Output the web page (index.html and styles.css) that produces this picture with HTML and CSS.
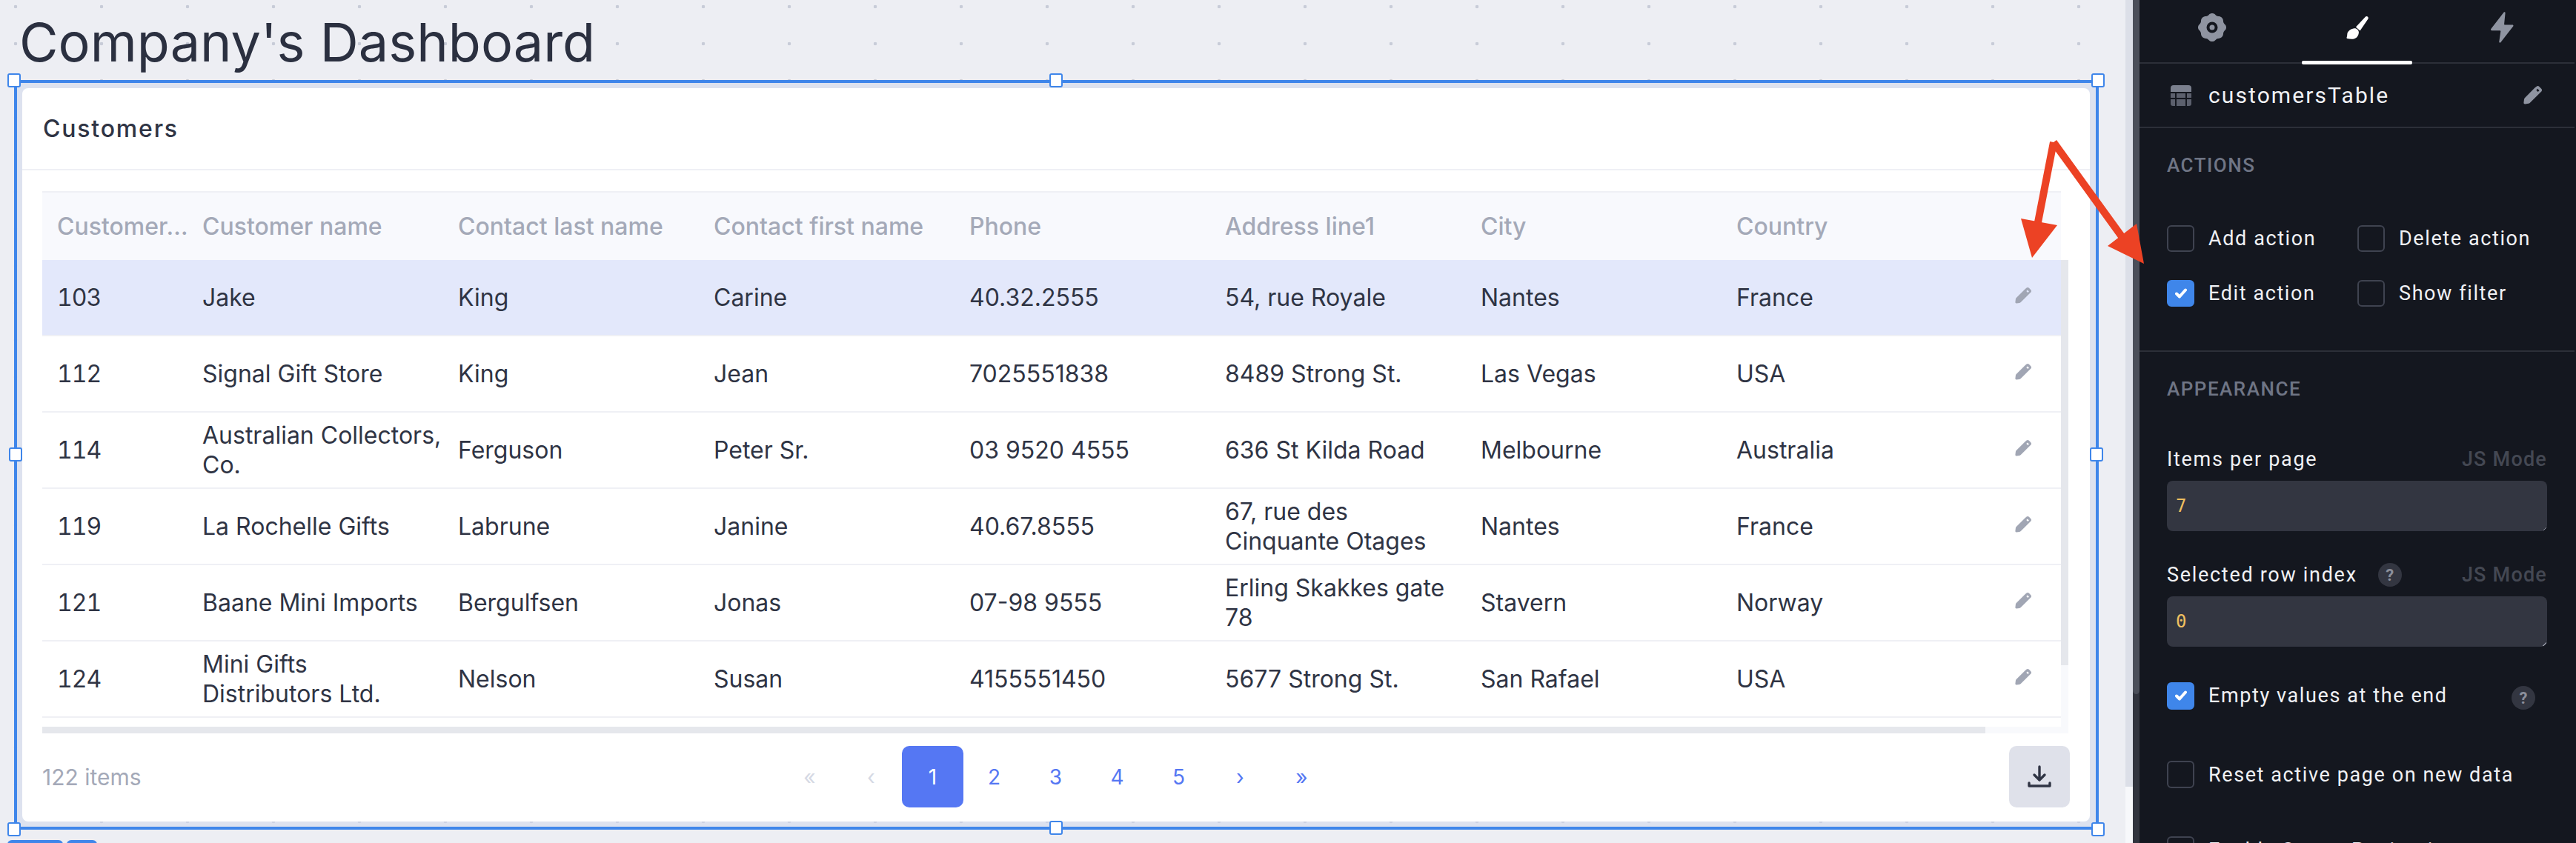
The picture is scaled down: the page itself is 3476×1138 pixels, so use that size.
FILE: index.html
```html
<!DOCTYPE html>
<html lang="en">
<head>
    <meta charset="UTF-8">
    <meta name="viewport" content="width=device-width, initial-scale=1.0">
    <title>Company's Dashboard</title>
    <link rel="stylesheet" href="styles.css">
</head>
<body>
    <svg class="sprites" width="0" height="0">
        <symbol id="pen" viewBox="0 0 22 22">
            <path fill-rule="evenodd" d="M13.6 2.200l2-1.600a2.600 2.600 0 0 1 3.300.2l2.400 2.400a2.600 2.600 0 0 1 .1 3.300L7.800 20c-.5.5-1 .8-1.700.9L2 21.500c-1 .1-1.700-.6-1.600-1.600l.5-4.200c.1-.7.4-1.200.9-1.700zM15.300 5l1.600-1.600 2 2-1.600 1.600z"/>
        </symbol>
        <symbol id="tick" viewBox="0 0 16 14">
            <path d="M2 7.500l4 4 8-9" fill="none" stroke="#fff" stroke-width="4" stroke-linecap="round" stroke-linejoin="round"/>
        </symbol>
    </svg>

    <div class="canvas">
        <h1 class="page-title">Company's Dashboard</h1>
        <div class="widget-frame">
            <span class="handle h-tl"></span><span class="handle h-tc"></span><span class="handle h-tr"></span>
            <span class="handle h-ml"></span><span class="handle h-mr"></span>
            <span class="handle h-bl"></span><span class="handle h-bc"></span><span class="handle h-br"></span>
            <div class="card">
                <div class="card-header">Customers</div>
                <div class="card-body">
                    <div class="table-wrap">
                        <table class="customers">
                            <colgroup>
                                <col class="col-id"><col class="col-std"><col class="col-std"><col class="col-std"><col class="col-std"><col class="col-std"><col class="col-std"><col class="col-std"><col>
                            </colgroup>
                            <thead>
                                <tr>
                                    <th>Customer…</th><th>Customer name</th><th>Contact last name</th><th>Contact first name</th><th>Phone</th><th>Address line1</th><th>City</th><th>Country</th><th></th>
                                </tr>
                            </thead>
                            <tbody>
                                <tr class="selected">
                                    <td>103</td><td>Jake</td><td>King</td><td>Carine</td><td>40.32.2555</td><td>54, rue Royale</td><td>Nantes</td><td>France</td>
                                    <td class="edit"><svg class="pen"><use href="#pen"/></svg></td>
                                </tr>
                                <tr>
                                    <td>112</td><td>Signal Gift Store</td><td>King</td><td>Jean</td><td>7025551838</td><td>8489 Strong St.</td><td>Las Vegas</td><td>USA</td>
                                    <td class="edit"><svg class="pen"><use href="#pen"/></svg></td>
                                </tr>
                                <tr>
                                    <td>114</td><td>Australian Collectors, Co.</td><td>Ferguson</td><td>Peter Sr.</td><td>03 9520 4555</td><td>636 St Kilda Road</td><td>Melbourne</td><td>Australia</td>
                                    <td class="edit"><svg class="pen"><use href="#pen"/></svg></td>
                                </tr>
                                <tr>
                                    <td>119</td><td>La Rochelle Gifts</td><td>Labrune</td><td>Janine</td><td>40.67.8555</td><td>67, rue des Cinquante Otages</td><td>Nantes</td><td>France</td>
                                    <td class="edit"><svg class="pen"><use href="#pen"/></svg></td>
                                </tr>
                                <tr>
                                    <td>121</td><td>Baane Mini Imports</td><td>Bergulfsen</td><td>Jonas</td><td>07-98 9555</td><td>Erling Skakkes gate 78</td><td>Stavern</td><td>Norway</td>
                                    <td class="edit"><svg class="pen"><use href="#pen"/></svg></td>
                                </tr>
                                <tr>
                                    <td>124</td><td>Mini Gifts Distributors Ltd.</td><td>Nelson</td><td>Susan</td><td>4155551450</td><td>5677 Strong St.</td><td>San Rafael</td><td>USA</td>
                                    <td class="edit"><svg class="pen"><use href="#pen"/></svg></td>
                                </tr>
                            </tbody>
                        </table>
                        <div class="scroll-y"><div class="scroll-y-thumb"></div></div>
                        <div class="scroll-x"><div class="scroll-x-thumb"></div></div>
                    </div>
                    <div class="table-footer">
                        <div class="item-count">122 items</div>
                        <div class="pagination">
                            <span class="page muted">«</span>
                            <span class="page muted">‹</span>
                            <span class="page active">1</span>
                            <span class="page">2</span>
                            <span class="page">3</span>
                            <span class="page">4</span>
                            <span class="page">5</span>
                            <span class="page">›</span>
                            <span class="page">»</span>
                        </div>
                        <div class="download">
                            <svg viewBox="0 0 32 32" width="32" height="32"><path d="M16 2v17M9 13l7 7 7-7M2 24v4h28v-4" fill="none" stroke="#2f3444" stroke-width="3.400" stroke-linecap="round" stroke-linejoin="round"/></svg>
                        </div>
                    </div>
                </div>
            </div>
        </div>
        <div class="tag-row">
            <span class="tag tag-wide"></span><span class="tag tag-small"></span>
        </div>
    </div>

    <div class="gutter"><div class="gutter-thumb"></div></div>
    <div class="panel-scroll"><div class="panel-scroll-thumb"></div></div>

    <aside class="panel">
        <div class="tabs">
            <div class="tab">
                <svg viewBox="0 0 38 38" width="38" height="38"><path fill="#8f94a1" fill-rule="evenodd" d="M15 1.500c2-2 6-2 8 0 1.200 1.300 2.500 2.600 4.300 2.600 3.700 0 6.700 2.600 6.700 6.300 0 2 1 3.300 2.500 4.800 2 2 2 5.600 0 7.600-1.500 1.500-2.500 2.800-2.500 4.800 0 3.700-3 6.400-6.700 6.300-1.800 0-3.100 1.300-4.300 2.600-2 2-6 2-8 0-1.200-1.300-2.500-2.600-4.300-2.600C7 34 4 31.300 4 27.600c0-2-1-3.300-2.500-4.800-2-2-2-5.600 0-7.600C3 13.700 4 12.400 4 10.400c0-3.700 3-6.300 6.700-6.300 1.800 0 3.100-1.300 4.300-2.600zM19 11.500a7.500 7.500 0 1 0 0 15 7.500 7.500 0 0 0 0-15zM19 15.500a3.500 3.500 0 1 1 0 7 3.500 3.500 0 0 1 0-7z"/></svg>
            </div>
            <div class="tab tab-active">
                <svg viewBox="0 0 30 31" width="30" height="31"><path fill="#fff" d="M26 .6c1-.8 2.300-.7 3.100.1.800.8.900 2 .2 3L18.600 19.400l-5.700-4.900zM10.500 16.300c3-.7 6.700 2.300 6.400 5.700-.3 4.300-3.200 8.500-8.200 8.700-2.400.1-5.300-.1-7.500-.7-.7-.2-.9-.7-.7-1.300.6-1.300.7-2.900.8-4.500.2-4 4.600-7 9.200-7.900z"/></svg>
            </div>
            <div class="tab">
                <svg viewBox="0 0 31 42" width="31" height="42"><path fill="#8f94a1" d="M17.500.8c.8-1 2.200-.4 2.100.8l-1.500 14.600c-.1.700.4 1.200 1.100 1.200h10c1.100 0 1.700 1.200 1 2.100L13.300 41.200c-.8 1-2.200.3-2-.9l2-13.800c.1-.7-.4-1.300-1.100-1.300H1.300c-1.100 0-1.700-1.200-1-2.100z"/></svg>
            </div>
        </div>

        <div class="widget-name">
            <svg class="table-icon" viewBox="0 0 28 28" width="28" height="28"><path fill="#7b808e" d="M4 0h20a4 4 0 0 1 4 4v5H0V4a4 4 0 0 1 4-4z"/><path fill="#5c606d" d="M0 11h6v6H0zM8 11h12v6H8zM22 11h6v6h-6zM0 19h6v9H3a3 3 0 0 1-3-3zM8 19h12v9H8zM22 19h6v6a3 3 0 0 1-3 3h-3z"/></svg>
            <span class="widget-title">customersTable</span>
            <svg class="pen-light" width="25" height="25"><use href="#pen"/></svg>
        </div>

        <section class="section section-actions">
            <h2 class="section-title">ACTIONS</h2>
            <div class="action-grid">
                <label class="check"><span class="box"></span>Add action</label>
                <label class="check"><span class="box"></span>Delete action</label>
                <label class="check"><span class="box checked"><svg width="16" height="14"><use href="#tick"/></svg></span>Edit action</label>
                <label class="check"><span class="box"></span>Show filter</label>
            </div>
        </section>

        <section class="section section-appearance">
            <h2 class="section-title">APPEARANCE</h2>

            <div class="field-head field-first">
                <span class="field-label">Items per page</span>
                <span class="js-mode">JS Mode</span>
            </div>
            <div class="code-input"><span class="code-value">7</span><i class="resizer"></i></div>

            <div class="field-head field-second">
                <span class="field-label">Selected row index</span>
                <span class="help">?</span>
                <span class="js-mode">JS Mode</span>
            </div>
            <div class="code-input"><span class="code-value">0</span><i class="resizer"></i></div>

            <label class="check check-empty"><span class="box checked"><svg width="16" height="14"><use href="#tick"/></svg></span>Empty values at the end<span class="help help-end">?</span></label>
            <label class="check check-reset"><span class="box"></span>Reset active page on new data</label>
            <label class="check check-server"><span class="box"></span>Enable Server Pagination</label>
        </section>
    </aside>

    <svg class="arrows" viewBox="0 0 3476 1138" width="3476" height="1138">
        <path d="M2771 192L2750 300M2771 192L2865 322" fill="none" stroke="#ec4224" stroke-width="10"/>
        <path d="M2727 295L2776 304L2742 348zM2883 302L2844 332L2893 356z" fill="#ec4224"/>
    </svg>
</body>
</html>
```

FILE: styles.css
```css
* {
    box-sizing: border-box;
}
html, body {
    margin: 0;
    height: 100%;
}
body {
    display: flex;
    width: 3476px;
    height: 1138px;
    overflow: hidden;
    font-family: Inter, sans-serif;
    color: #2f3444;
    background: #14171f;
}
.sprites {
    position: absolute;
}

/* canvas */
.canvas {
    flex: none;
    width: 2868px;
    height: 1138px;
    padding: 0 36px 0 19px;
    overflow: hidden;
    background-color: #edeef3;
    background-image: radial-gradient(circle, #c8ccd8 2px, transparent 2.6px);
    background-size: 116px 50px;
    background-position: -37px -16px;
}
.page-title {
    margin: 0;
    height: 108px;
    padding: 15px 0 0 7px;
    font-size: 72px;
    line-height: 84px;
    font-weight: 400;
    color: #2b3040;
    white-space: nowrap;
}
.widget-frame {
    position: relative;
    height: 1012px;
    padding: 7px 8px 7px 7px;
    border: 4px solid #3f86ea;
    background: rgba(206, 214, 235, 0.5);
}
.handle {
    position: absolute;
    width: 18px;
    height: 19px;
    background: #fff;
    border: 2px solid #3f86ea;
    border-radius: 3px;
}
.h-tl { left: -13px; top: -13px; }
.h-tc { left: 1393px; top: -13px; }
.h-tr { right: -12px; top: -13px; }
.h-ml { left: -11px; top: 492px; }
.h-mr { right: -10px; top: 492px; }
.h-bl { left: -13px; bottom: -13px; }
.h-bc { left: 1393px; bottom: -11px; }
.h-br { right: -12px; bottom: -13px; }

.card {
    height: 990px;
    background: #fff;
    border-radius: 8px;
}
.card-header {
    height: 111px;
    padding: 0 28px;
    display: flex;
    align-items: center;
    border-bottom: 2px solid #eff0f5;
    font-size: 32px;
    font-weight: 500;
    letter-spacing: 1.800px;
}
.card-body {
    padding: 28px 28px 0 27px;
}

/* table */
.table-wrap {
    position: relative;
    width: 2734px;
    height: 731px;
}
.customers {
    width: 2724px;
    table-layout: fixed;
    border-collapse: separate;
    border-spacing: 0;
    font-size: 32px;
    line-height: 40px;
}
.col-id { width: 196px; }
.col-std { width: 345px; }
.customers th {
    height: 93px;
    padding: 0 11px 0 20px;
    text-align: left;
    font-weight: 500;
    color: #a4a9b8;
    background: #f8f9fd;
    border-top: 2px solid #eff0f5;
    white-space: nowrap;
}
.customers td {
    height: 103px;
    padding: 0 0 0 20px;
    border-bottom: 2px solid #eff0f5;
}
.customers td:first-child {
    font-variant-numeric: tabular-nums;
    letter-spacing: -1px;
}
.customers tr.selected td {
    background: #e3e8fb;
}
.customers td.edit {
    padding: 0 40px 10px 0;
    text-align: right;
}
.pen {
    display: inline-block;
    width: 22px;
    height: 22px;
    vertical-align: middle;
    fill: #a1a6b4;
}
.pen-light {
    fill: #8f94a1;
}
.scroll-y {
    position: absolute;
    top: 93px;
    right: 0;
    width: 10px;
    height: 638px;
    background: #f8f9fc;
}
.scroll-y-thumb {
    height: 547px;
    background: #e5e7ec;
}
.scroll-x {
    position: absolute;
    left: 0;
    bottom: -1px;
    width: 2734px;
    height: 9px;
    background: #f8f9fc;
}
.scroll-x-thumb {
    width: 2622px;
    height: 100%;
    background: #e5e7ec;
}
.table-footer {
    height: 83px;
    margin-top: 18px;
    display: flex;
    align-items: center;
}
.item-count {
    flex: none;
    width: 994px;
    font-size: 30px;
    color: #a4a9b8;
}
.pagination {
    display: flex;
}
.page {
    width: 83px;
    height: 83px;
    display: flex;
    align-items: center;
    justify-content: center;
    font-size: 28px;
    color: #5577f3;
    border-radius: 10px;
}
.page.active {
    background: #5577f3;
    color: #fff;
}
.page.muted {
    color: #d5d9e4;
}
.download {
    width: 82px;
    height: 83px;
    margin-left: auto;
    margin-right: -1px;
    display: flex;
    align-items: center;
    justify-content: center;
    background: #dfe1ea;
    border-radius: 10px;
}

.tag-row {
    display: flex;
    gap: 5px;
    padding: 14px 0 0;
    margin-left: -9px;
}
.tag {
    height: 10px;
    background: #3f86ea;
    border-radius: 6px 6px 0 0;
}
.tag-wide { width: 75px; }
.tag-small { width: 41px; }

/* strip between canvas and panel */
.gutter {
    flex: none;
    width: 10px;
    height: 1138px;
    background: #f7f8fb;
}
.gutter-thumb {
    height: 1062px;
    background: #dcdfe8;
}
.panel-scroll {
    flex: none;
    width: 9px;
    height: 1138px;
    background: #31343e;
}
.panel-scroll-thumb {
    height: 937px;
    background: #4b4f5a;
    border-radius: 0 0 5px 5px;
}

/* right panel */
.panel {
    flex: none;
    width: 589px;
    height: 1138px;
    overflow: hidden;
    background: #14171f;
    font-family: Roboto, sans-serif;
    color: #f0f1f4;
}
.tabs {
    display: flex;
    height: 86px;
    border-bottom: 2px solid #2c2f38;
    margin-right: 2px;
}
.tab {
    flex: 1;
    display: flex;
    align-items: center;
    justify-content: center;
    padding-bottom: 10px;
}
.tab-active {
    flex: none;
    width: 196px;
    position: relative;
}
.tab-active::after {
    content: "";
    position: absolute;
    left: 23px;
    bottom: -3px;
    width: 149px;
    height: 5px;
    background: #fff;
    border-radius: 2px;
}
.widget-name {
    height: 87px;
    padding: 0 44px 0 42px;
    display: flex;
    align-items: center;
    gap: 23px;
    border-bottom: 2px solid #2c2f38;
    margin-right: 2px;
}
.widget-title {
    flex: 1;
    font-size: 30px;
    letter-spacing: 2.100px;
}
.section {
    padding: 0 39px 0 37px;
}
.section-actions {
    height: 302px;
    border-bottom: 2px solid #2c2f38;
    margin-right: 2px;
}
.section-title {
    margin: 0;
    font-size: 26px;
    font-weight: 500;
    line-height: 30px;
    letter-spacing: 1.500px;
    color: #6f7585;
}
.section-actions .section-title {
    padding-top: 35px;
}
.action-grid {
    margin-top: 66px;
    display: grid;
    grid-template-columns: 257px 1fr;
    row-gap: 38px;
}
.check {
    display: flex;
    align-items: center;
    gap: 19px;
    font-size: 27px;
    letter-spacing: 1.600px;
    white-space: nowrap;
}
.box {
    flex: none;
    width: 37px;
    height: 36px;
    display: flex;
    align-items: center;
    justify-content: center;
    border: 2px solid #3f4350;
    border-radius: 6px;
}
.box.checked {
    background: #3f86ea;
    border-color: #3f86ea;
}
.section-appearance {
    padding-top: 35px;
}
.field-head {
    display: flex;
    align-items: center;
    height: 36px;
}
.field-first {
    margin-top: 62px;
}
.field-second {
    margin-top: 41px;
}
.field-label {
    font-size: 27px;
    letter-spacing: 1.700px;
}
.js-mode {
    margin-left: auto;
    font-size: 27px;
    font-weight: 500;
    letter-spacing: 1.200px;
    color: #444853;
}
.help {
    width: 32px;
    height: 32px;
    margin-left: 28px;
    display: flex;
    align-items: center;
    justify-content: center;
    border-radius: 50%;
    background: #333641;
    color: #8b8f9b;
    font-size: 22px;
    font-weight: 700;
    letter-spacing: 0;
}
.help-end {
    margin-left: auto;
    margin-right: 16px;
    margin-top: 6px;
}
.code-input {
    position: relative;
    height: 68px;
    margin-top: 11px;
    padding: 0 12px;
    display: flex;
    align-items: center;
    border-radius: 8px;
    background: #333641;
}
.code-value {
    font-family: "DejaVu Sans Mono", monospace;
    font-size: 24px;
    color: #f0c060;
}
.resizer {
    position: absolute;
    right: 1px;
    bottom: 1px;
    width: 5px;
    height: 5px;
    background: linear-gradient(135deg, transparent 50%, #8b8f9b 50%, #8b8f9b 65%, transparent 65%);
}
.check-empty {
    margin-top: 47px;
}
.check-empty .box,
.check-reset .box,
.check-server .box {
    height: 37px;
}
.check-reset {
    margin-top: 69px;
}
.check-server {
    margin-top: 65px;
}

.arrows {
    position: absolute;
    left: 0;
    top: 0;
    pointer-events: none;
}
```
